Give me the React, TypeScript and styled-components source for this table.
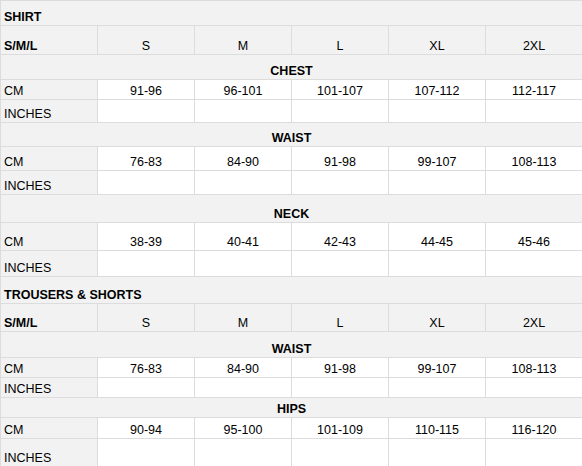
import React from "react";
import styled, { createGlobalStyle } from "styled-components";

const Global = createGlobalStyle`
  html, body { margin: 0; padding: 0; background: #fff; }
  body { font-family: "Liberation Sans", Arial, sans-serif; font-size: 12.5px; color: #000; }
`;

const Table = styled.table`
  width: 582px;
  border-collapse: collapse;
  table-layout: fixed;
`;

const Row = styled.tr<{ $h: number }>`
  height: ${(p) => p.$h}px;
`;

const Cell = styled.td<{ $grey?: boolean; $bold?: boolean; $center?: boolean }>`
  border: 1px solid #dcdcdc;
  padding: 0 3px 1px 3px;
  line-height: 14px;
  background: ${(p) => (p.$grey ? "#f2f2f2" : "#ffffff")};
  font-weight: ${(p) => (p.$bold ? 700 : 400)};
  text-align: ${(p) => (p.$center ? "center" : "left")};
  vertical-align: bottom;
  white-space: nowrap;
  overflow: hidden;
`;

type Block =
  | { kind: "title"; text: string; h: number }
  | { kind: "sizes"; h: number }
  | { kind: "section"; text: string; h: number }
  | { kind: "data"; label: string; values: string[]; h: number };

const SIZES = ["S", "M", "L", "XL", "2XL"];

const rows: Block[] = [
  { kind: "title", text: "SHIRT", h: 25 },
  { kind: "sizes", h: 29 },
  { kind: "section", text: "CHEST", h: 25 },
  { kind: "data", label: "CM", values: ["91-96", "96-101", "101-107", "107-112", "112-117"], h: 20 },
  { kind: "data", label: "INCHES", values: ["", "", "", "", ""], h: 23 },
  { kind: "section", text: "WAIST", h: 24 },
  { kind: "data", label: "CM", values: ["76-83", "84-90", "91-98", "99-107", "108-113"], h: 24 },
  { kind: "data", label: "INCHES", values: ["", "", "", "", ""], h: 24 },
  { kind: "section", text: "NECK", h: 28 },
  { kind: "data", label: "CM", values: ["38-39", "40-41", "42-43", "44-45", "45-46"], h: 28 },
  { kind: "data", label: "INCHES", values: ["", "", "", "", ""], h: 26 },
  { kind: "title", text: "TROUSERS & SHORTS", h: 27 },
  { kind: "sizes", h: 28 },
  { kind: "section", text: "WAIST", h: 26 },
  { kind: "data", label: "CM", values: ["76-83", "84-90", "91-98", "99-107", "108-113"], h: 20 },
  { kind: "data", label: "INCHES", values: ["", "", "", "", ""], h: 20 },
  { kind: "section", text: "HIPS", h: 20 },
  { kind: "data", label: "CM", values: ["90-94", "95-100", "101-109", "110-115", "116-120"], h: 21 },
  { kind: "data", label: "INCHES", values: ["", "", "", "", ""], h: 28 },
];

export default function App() {
  return (
    <>
      <Global />
      <Table>
        <colgroup>
          {Array.from({ length: 6 }).map((_, i) => (
            <col key={i} style={{ width: 97 }} />
          ))}
        </colgroup>
        <tbody>
          {rows.map((r, i) => {
            if (r.kind === "title")
              return (
                <Row key={i} $h={r.h}>
                  <Cell colSpan={6} $grey $bold>
                    {r.text}
                  </Cell>
                </Row>
              );
            if (r.kind === "sizes")
              return (
                <Row key={i} $h={r.h}>
                  <Cell $grey $bold>S/M/L</Cell>
                  {SIZES.map((s) => (
                    <Cell key={s} $grey $center>
                      {s}
                    </Cell>
                  ))}
                </Row>
              );
            if (r.kind === "section")
              return (
                <Row key={i} $h={r.h}>
                  <Cell colSpan={6} $grey $bold $center>
                    {r.text}
                  </Cell>
                </Row>
              );
            return (
              <Row key={i} $h={r.h}>
                <Cell $grey>{r.label}</Cell>
                {r.values.map((v, j) => (
                  <Cell key={j} $center>
                    {v}
                  </Cell>
                ))}
              </Row>
            );
          })}
        </tbody>
      </Table>
    </>
  );
}
